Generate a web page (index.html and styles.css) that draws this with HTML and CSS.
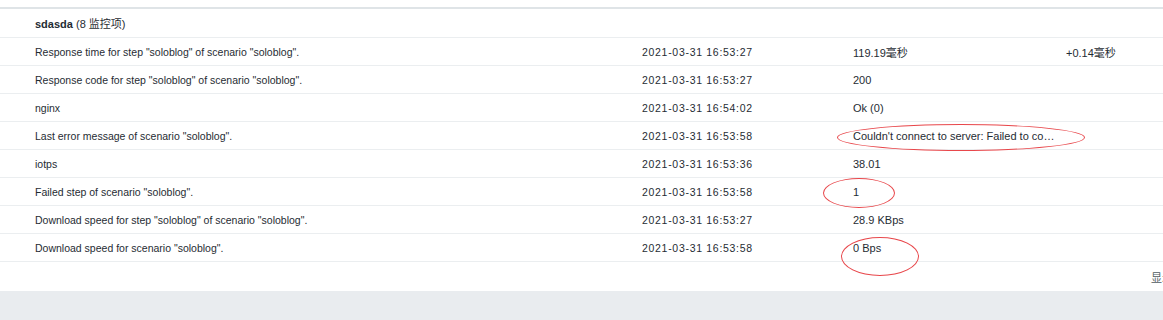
FILE: index.html
```html
<!DOCTYPE html>
<html lang="zh">
<head>
<meta charset="utf-8">
<link rel="stylesheet" href="styles.css">
</head>
<body>
<div class="page">
  <div class="panel">
    <table class="items">
      <colgroup>
        <col class="c-name">
        <col class="c-time">
        <col class="c-value">
        <col class="c-change">
      </colgroup>
      <thead>
        <tr class="group">
          <th colspan="4"><b>sdasda</b> (8 监控项)</th>
        </tr>
      </thead>
      <tbody>
        <tr><td class="name">Response time for step "soloblog" of scenario "soloblog".</td><td class="time">2021-03-31 16:53:27</td><td>119.19毫秒</td><td>+0.14毫秒</td></tr>
        <tr><td class="name">Response code for step "soloblog" of scenario "soloblog".</td><td class="time">2021-03-31 16:53:27</td><td>200</td><td></td></tr>
        <tr><td class="name">nginx</td><td class="time">2021-03-31 16:54:02</td><td>Ok (0)</td><td></td></tr>
        <tr><td class="name">Last error message of scenario "soloblog".</td><td class="time">2021-03-31 16:53:58</td><td>Couldn't connect to server: Failed to co…</td><td></td></tr>
        <tr><td class="name">iotps</td><td class="time">2021-03-31 16:53:36</td><td>38.01</td><td></td></tr>
        <tr><td class="name">Failed step of scenario "soloblog".</td><td class="time">2021-03-31 16:53:58</td><td>1</td><td></td></tr>
        <tr><td class="name">Download speed for step "soloblog" of scenario "soloblog".</td><td class="time">2021-03-31 16:53:27</td><td>28.9 KBps</td><td></td></tr>
        <tr><td class="name">Download speed for scenario "soloblog".</td><td class="time">2021-03-31 16:53:58</td><td>0 Bps</td><td></td></tr>
      </tbody>
    </table>
    <div class="footer"><span class="count">显示 8 中的 8</span></div>
  </div>
  <div class="bottom"></div>
  <span class="mark mark-1"></span>
  <span class="mark mark-2"></span>
  <span class="mark mark-3"></span>
</div>
</body>
</html>
```

FILE: styles.css
```css
html, body {
  margin: 0;
  padding: 0;
  background: #ffffff;
}
.page {
  position: relative;
  width: 1163px;
  height: 320px;
  overflow: hidden;
  font-family: "Liberation Sans", Arial, "Noto Sans CJK SC", sans-serif;
  font-size: 11px;
  color: #1f2c33;
}
.panel {
  margin-top: 7px;
  border-top: 2px solid #dfe4e7;
  background: #ffffff;
}
.items {
  width: 1163px;
  border-collapse: collapse;
  table-layout: fixed;
}
.c-name { width: 642px; }
.c-time { width: 211px; }
.c-value { width: 213px; }
.c-change { width: 97px; }
.items th,
.items td {
  height: 27px;
  padding: 0;
  text-align: left;
  white-space: nowrap;
  overflow: hidden;
  border-bottom: 1px solid #ebeef0;
  vertical-align: middle;
}
.items th {
  height: 28px;
  font-weight: normal;
  padding-left: 35px;
}
.items th b {
  font-weight: bold;
}
.items td.name {
  padding-left: 35px;
  font-size: 10.5px;
}
.items td.time {
  font-size: 10.5px;
  letter-spacing: 0.7px;
}
.footer {
  height: 29px;
  display: flex;
  align-items: center;
  overflow: hidden;
}
.count {
  margin-left: 1151px;
  white-space: nowrap;
  color: #4f5b61;
}
.bottom {
  height: 30px;
  background: #e9ecef;
}
.mark {
  position: absolute;
  border: 1px solid #e8474b;
  border-radius: 50%;
}
.mark-1 { left: 837px; top: 124px; width: 246px; height: 25px; }
.mark-2 { left: 823px; top: 178px; width: 70px; height: 28px; }
.mark-3 { left: 841px; top: 237px; width: 76px; height: 37px; }
```
